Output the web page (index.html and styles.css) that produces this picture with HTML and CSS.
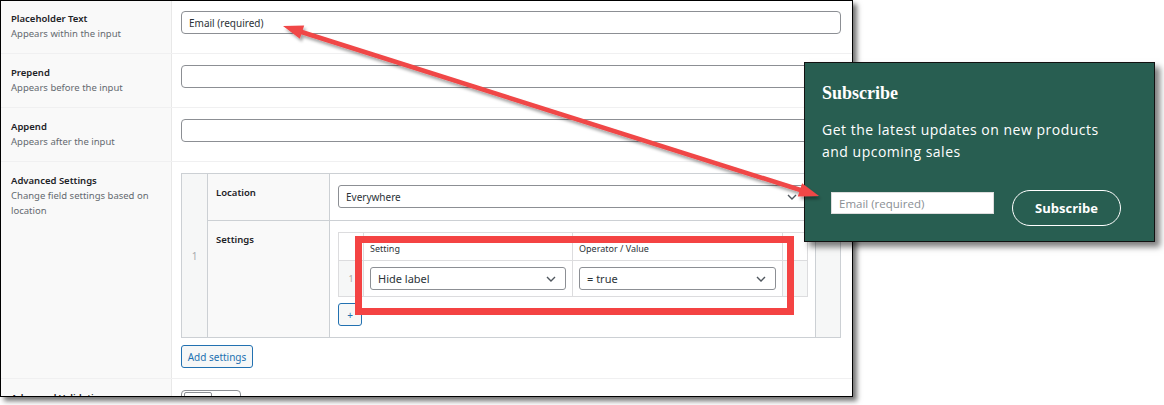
FILE: index.html
```html
<!DOCTYPE html>
<html>
<head>
<meta charset="utf-8">
<link rel="stylesheet" href="styles.css">
</head>
<body>
<div class="shot">
  <div class="row row-first">
    <div class="lab"><div class="lab-t">Placeholder Text</div><div class="lab-d">Appears within the input</div></div>
    <div class="val"><div class="inp">Email (required)</div></div>
  </div>
  <div class="row">
    <div class="lab"><div class="lab-t">Prepend</div><div class="lab-d">Appears before the input</div></div>
    <div class="val"><div class="inp"></div></div>
  </div>
  <div class="row">
    <div class="lab"><div class="lab-t">Append</div><div class="lab-d">Appears after the input</div></div>
    <div class="val"><div class="inp"></div></div>
  </div>
  <div class="row row-adv">
    <div class="lab"><div class="lab-t">Advanced Settings</div><div class="lab-d">Change field settings based on location</div></div>
    <div class="val">
      <div class="rep">
        <div class="rep-num">1</div>
        <div class="rep-lab">Location</div>
        <div class="rep-val">
          <div class="sel"><span>Everywhere</span><svg class="chev" width="10" height="6" viewBox="0 0 10 6"><path d="M1 1l4 4 4-4" fill="none" stroke="#50575e" stroke-width="1.4"/></svg></div>
        </div>
        <div class="rep-rm"></div>
        <div class="rep-lab">Settings</div>
        <div class="rep-val">
          <div class="sub">
            <div class="sub-h"></div>
            <div class="sub-h">Setting</div>
            <div class="sub-h">Operator / Value</div>
            <div class="sub-h"></div>
            <div class="sub-num">1</div>
            <div class="sub-c"><div class="sel"><span>Hide label</span><svg class="chev" width="10" height="6" viewBox="0 0 10 6"><path d="M1 1l4 4 4-4" fill="none" stroke="#50575e" stroke-width="1.4"/></svg></div></div>
            <div class="sub-c"><div class="sel"><span>= true</span><svg class="chev" width="10" height="6" viewBox="0 0 10 6"><path d="M1 1l4 4 4-4" fill="none" stroke="#50575e" stroke-width="1.4"/></svg></div></div>
            <div class="sub-rm"></div>
          </div>
          <div class="btn btn-plus">+</div>
        </div>
      </div>
      <div class="btn btn-add">Add settings</div>
    </div>
  </div>
  <div class="row">
    <div class="lab"><div class="lab-t">Advanced Validation</div></div>
    <div class="val"><div class="toggle"><div class="toggle-k"></div></div></div>
  </div>
</div>

<div class="popup">
  <div class="pop-title">Subscribe</div>
  <div class="pop-text">Get the latest updates on new products and upcoming sales</div>
  <div class="pop-form">
    <div class="pop-inp">Email (required)</div>
    <div class="pop-btn">Subscribe</div>
  </div>
</div>

<svg class="overlay" width="1164" height="405" viewBox="0 0 1164 405">
  <defs>
    <filter id="sh" x="-10%" y="-10%" width="120%" height="130%">
      <feDropShadow dx="2" dy="3" stdDeviation="1.8" flood-color="#000" flood-opacity="0.35"/>
    </filter>
  </defs>
  <rect x="358.5" y="239.5" width="432" height="72" fill="none" stroke="#f44343" stroke-width="7"/>
  <g filter="url(#sh)" fill="#f04646">
    <line x1="300" y1="31.5" x2="802" y2="190.5" stroke="#f04646" stroke-width="4.5"/>
    <polygon points="283,26 299.9,38.7 304.2,25.4"/>
    <polygon points="819,196 797.8,196.6 802.1,183.3"/>
  </g>
</svg>
</body>
</html>
```

FILE: styles.css
```css
* { box-sizing: border-box; }

body {
  margin: 0;
  width: 1164px;
  height: 405px;
  background: #fff;
  position: relative;
  overflow: hidden;
  font-family: "Noto Sans", "Open Sans", sans-serif;
}

.shot {
  width: 853px;
  height: 397px;
  border: 1px solid #000;
  background: #fff;
  box-shadow: 4px 4px 5px rgba(0, 0, 0, 0.55);
  overflow: hidden;
}

.row {
  display: grid;
  grid-template-columns: 171px 680px;
  height: 54px;
  border-bottom: 1px solid #f0f0f1;
}

.row-first { height: 53px; }
.row-first .val { padding-top: 10px; }
.row-first .lab { padding-top: 10px; }

.row-adv { height: 217px; }

.lab {
  background: #f9f9f9;
  border-right: 1px solid #e8e8e8;
  padding: 11px 11px 11px 10px;
}

.lab-t {
  font-size: 9.5px;
  font-weight: 600;
  line-height: 15px;
  color: #1d2327;
}

.lab-d {
  font-size: 9.5px;
  line-height: 15px;
  color: #646970;
}

.val {
  padding: 11px 11px 0 9px;
}

.inp {
  height: 23px;
  border: 1px solid #8c8f94;
  border-radius: 4px;
  font-size: 10px;
  padding: 0 7px;
  display: flex;
  align-items: center;
  color: #2c3338;
}

.rep {
  display: grid;
  grid-template-columns: 25px 121px 485px 24px;
  grid-template-rows: 46px 116px;
  gap: 1px;
  padding: 1px;
  background: #ccd0d4;
  width: 660px;
}

.rep-num {
  grid-row: 1 / 3;
  grid-column: 1;
  background: #f6f7f7;
  display: flex;
  align-items: center;
  justify-content: center;
  font-size: 10px;
  color: #a7aaad;
}

.rep-lab {
  background: #f9f9f9;
  padding: 11px 8px;
  font-size: 9.5px;
  font-weight: 600;
  line-height: 15px;
  color: #1d2327;
}

.rep-val {
  background: #fff;
  padding: 11px 8px 0 8px;
}

.rep-rm {
  grid-row: 1 / 3;
  grid-column: 4;
  background: #f6f7f7;
}

.sel {
  height: 23px;
  border: 1px solid #8c8f94;
  border-radius: 3px;
  padding: 0 9px 0 7px;
  display: flex;
  align-items: center;
  justify-content: space-between;
  font-size: 10px;
  color: #2c3338;
}

.chev { display: block; }

.sub {
  display: grid;
  grid-template-columns: 24px 208px 209px 24px;
  grid-template-rows: 27px 35px;
  gap: 1px;
  padding: 1px;
  background: #dcdcde;
  width: 470px;
}

.sub-h {
  background: #fff;
  padding: 9px 6px 0;
  font-size: 9px;
  color: #2c3338;
}

.sub-num {
  background: #f6f7f7;
  display: flex;
  align-items: center;
  justify-content: center;
  font-size: 9px;
  color: #b0a8a2;
}

.sub-c {
  background: #fff;
  padding: 6px;
}

.sub-c .sel { font-size: 11px; }

.sub-rm { background: #f6f7f7; }

.btn {
  border: 1px solid #2271b1;
  border-radius: 3px;
  color: #2271b1;
  background: #f6f7f7;
  display: flex;
  align-items: center;
  justify-content: center;
  height: 23px;
}

.btn-plus {
  width: 24px;
  margin-top: 6px;
  font-size: 10px;
}

.btn-add {
  width: 72px;
  margin-top: 7px;
  font-size: 10px;
}

.toggle {
  width: 60px;
  height: 22px;
  border: 1px solid #8c8f94;
  border-radius: 4px;
  padding: 1px 2px;
}

.toggle-k {
  width: 28px;
  height: 18px;
  border: 1px solid #8c8f94;
  border-radius: 2px;
}

.popup {
  position: absolute;
  left: 804px;
  top: 62px;
  width: 351px;
  height: 180px;
  background: #285e51;
  border: 1px solid #111;
  box-shadow: 5px 5px 6px rgba(0, 0, 0, 0.5);
  padding: 19px 17px 0 17px;
  color: #fff;
}

.pop-title {
  font-family: "Liberation Serif", serif;
  font-weight: bold;
  font-size: 18px;
  line-height: 22px;
}

.pop-text {
  margin-top: 15px;
  font-family: "Open Sans", sans-serif;
  font-size: 14px;
  letter-spacing: 0.5px;
  line-height: 22px;
  width: 300px;
}

.pop-form {
  display: flex;
  align-items: flex-start;
  margin-top: 27px;
  padding-left: 9px;
}

.pop-inp {
  margin-top: 2px;
  width: 163px;
  height: 22px;
  background: #fff;
  border: 1px solid #ddd;
  font-family: "Open Sans", sans-serif;
  font-size: 11.5px;
  color: #8a8f94;
  padding: 0 7px;
  display: flex;
  align-items: center;
}

.pop-btn {
  margin-left: 18px;
  width: 109px;
  height: 36px;
  border: 1.5px solid #fff;
  border-radius: 18px;
  font-family: "Open Sans", sans-serif;
  font-weight: 700;
  font-size: 13px;
  display: flex;
  align-items: center;
  justify-content: center;
}

.overlay {
  position: absolute;
  left: 0;
  top: 0;
  pointer-events: none;
}
```
